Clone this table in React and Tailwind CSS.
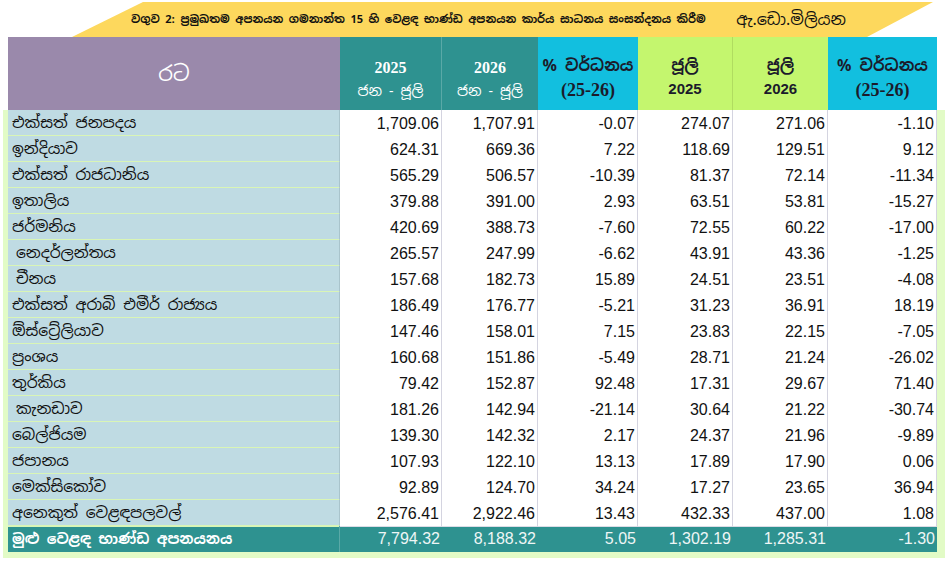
import React from 'react';

const rows = [
  { name: 'එක්සත් ජනපදය', v: ['1,709.06', '1,707.91', '-0.07', '274.07', '271.06', '-1.10'] },
  { name: 'ඉන්දියාව', v: ['624.31', '669.36', '7.22', '118.69', '129.51', '9.12'] },
  { name: 'එක්සත් රාජධානිය', v: ['565.29', '506.57', '-10.39', '81.37', '72.14', '-11.34'] },
  { name: 'ඉතාලිය', v: ['379.88', '391.00', '2.93', '63.51', '53.81', '-15.27'] },
  { name: 'ජර්මනිය', v: ['420.69', '388.73', '-7.60', '72.55', '60.22', '-17.00'] },
  { name: 'නෙදර්ලන්තය', v: ['265.57', '247.99', '-6.62', '43.91', '43.36', '-1.25'], indent: true },
  { name: 'චීනය', v: ['157.68', '182.73', '15.89', '24.51', '23.51', '-4.08'], indent: true },
  { name: 'එක්සත් අරාබි එමීර් රාජ්‍යය', v: ['186.49', '176.77', '-5.21', '31.23', '36.91', '18.19'] },
  { name: 'ඕස්ට්‍රේලියාව', v: ['147.46', '158.01', '7.15', '23.83', '22.15', '-7.05'] },
  { name: 'ප්‍රංශය', v: ['160.68', '151.86', '-5.49', '28.71', '21.24', '-26.02'] },
  { name: 'තුර්කිය', v: ['79.42', '152.87', '92.48', '17.31', '29.67', '71.40'] },
  { name: 'කැනඩාව', v: ['181.26', '142.94', '-21.14', '30.64', '21.22', '-30.74'], indent: true },
  { name: 'බෙල්ජියම', v: ['139.30', '142.32', '2.17', '24.37', '21.96', '-9.89'] },
  { name: 'ජපානය', v: ['107.93', '122.10', '13.13', '17.89', '17.90', '0.06'] },
  { name: 'මෙක්සිකෝව', v: ['92.89', '124.70', '34.24', '17.27', '23.65', '36.94'] },
  { name: 'අනෙකුත් වෙළඳපලවල්', v: ['2,576.41', '2,922.46', '13.43', '432.33', '437.00', '1.08'] },
];

const total = ['7,794.32', '8,188.32', '5.05', '1,302.19', '1,285.31', '-1.30'];

const sinhala = "font-['Noto_Sans_Sinhala','Noto_Serif_Sinhala','Noto_Sans',sans-serif]";
const grid = 'grid grid-cols-[332px_102px_96px_100px_95px_95px_109px]';

export default function App() {
  return (
    <div className="w-[950px] h-[561px] bg-white overflow-hidden text-[#111]">
      {/* title banner */}
      <div className="pt-[2px]">
        <div className="h-[35px] bg-[#fdd85d] [clip-path:polygon(143px_0,933px_0,867px_100%,72px_100%)] flex items-center">
          <span className={`ml-[131px] whitespace-nowrap text-[11px] font-bold ${sinhala}`}>
            වගුව 2: ප්‍රමුඛතම අපනයන ගමනාන්ත 15 හි වෙළඳ භාණ්ඩ අපනයන කාර්ය සාධනය සංසන්දනය කිරීම
          </span>
          <span className={`ml-auto mr-[104px] whitespace-nowrap text-[16px] ${sinhala}`}>ඇ.ඩො.මිලියන</span>
        </div>
      </div>

      {/* header */}
      <div className={`${grid} ml-[8px] h-[73px]`}>
        <div className={`bg-[#9a89ab] text-white flex items-center justify-center text-[21px] ${sinhala}`}>රට</div>
        <div className="bg-[#2e9290] text-white flex flex-col items-center justify-center gap-[5px] pt-[12px] border-r border-[#5aa9a7]">
          <span className="font-['Liberation_Serif',serif] font-bold text-[16px] leading-[18px]">2025</span>
          <span className={`text-[14px] leading-[18px] ${sinhala}`}>ජන - ජූලි</span>
        </div>
        <div className="bg-[#2e9290] text-white flex flex-col items-center justify-center gap-[5px] pt-[12px]">
          <span className="font-['Liberation_Serif',serif] font-bold text-[16px] leading-[18px]">2026</span>
          <span className={`text-[14px] leading-[18px] ${sinhala}`}>ජන - ජූලි</span>
        </div>
        <div className="bg-[#12bfdf] flex flex-col items-center justify-center gap-[4px] pt-[8px] text-[#1b1b2b]">
          <span className={`font-bold text-[16px] leading-[20px] ${sinhala}`}>% වර්ධනය</span>
          <span className="font-['Liberation_Serif',serif] font-bold text-[18px] leading-[20px]">(25-26)</span>
        </div>
        <div className="bg-[#c4f66e] flex flex-col items-center justify-center gap-[4px] pt-[6px] text-[#1b1b2b] border-r border-[#b0dc60]">
          <span className={`font-bold text-[16px] leading-[20px] ${sinhala}`}>ජූලි</span>
          <span className="font-['Liberation_Sans',sans-serif] font-bold text-[15px] leading-[18px]">2025</span>
        </div>
        <div className="bg-[#c4f66e] flex flex-col items-center justify-center gap-[4px] pt-[6px] text-[#1b1b2b]">
          <span className={`font-bold text-[16px] leading-[20px] ${sinhala}`}>ජූලි</span>
          <span className="font-['Liberation_Sans',sans-serif] font-bold text-[15px] leading-[18px]">2026</span>
        </div>
        <div className="bg-[#12bfdf] flex flex-col items-center justify-center gap-[4px] pt-[8px] text-[#1b1b2b]">
          <span className={`font-bold text-[16px] leading-[20px] ${sinhala}`}>% වර්ධනය</span>
          <span className="font-['Liberation_Serif',serif] font-bold text-[18px] leading-[20px]">(25-26)</span>
        </div>
      </div>

      {/* body */}
      <div className="ml-[3px] w-[942px] bg-[#e2fbc6] pl-[5px] pr-[8px] pb-[6px]">
        {rows.map((r) => (
          <div key={r.name} className={`${grid} h-[26px]`}>
            <div
              className={`bg-[#bfdbe3] border-b-2 border-[#d9f5b6] border-r border-r-[#a9c4cc] flex items-center text-[15.5px] ${r.indent ? 'pl-[8px]' : 'pl-[4px]'} ${sinhala}`}
            >
              {r.name}
            </div>
            {r.v.map((x, i) => (
              <div
                key={i}
                className="bg-white border-b border-[#dcdce6] border-r border-r-[#d4d4e0] flex items-center justify-end pr-[2px] pt-[2px] text-[16px] font-['Liberation_Sans',sans-serif]"
              >
                {x}
              </div>
            ))}
          </div>
        ))}
        <div className={`${grid} h-[26px] bg-[#2e9290] text-white`}>
          <div className={`flex items-center pl-[4px] text-[14.5px] font-bold border-r border-[#5aa9a7] ${sinhala}`}>
            මුළු වෙළඳ භාණ්ඩ අපනයනය
          </div>
          {total.map((x, i) => (
            <div key={i} className="flex items-center justify-end pr-[2px] text-[16px] text-[#eef6f6] font-['Liberation_Sans',sans-serif]">
              {x}
            </div>
          ))}
        </div>
      </div>
    </div>
  );
}
